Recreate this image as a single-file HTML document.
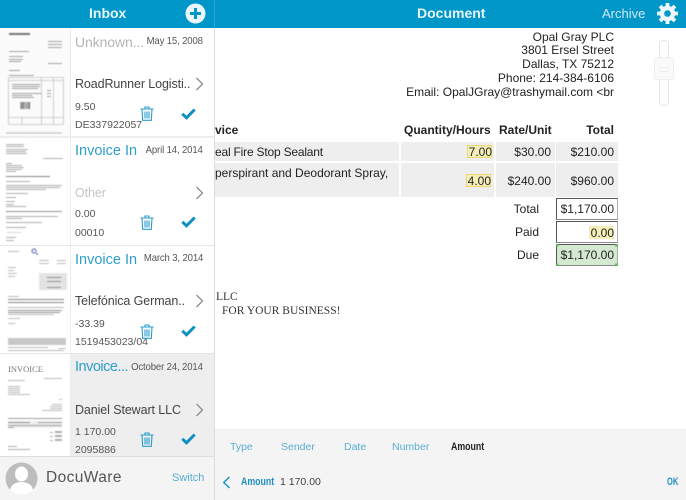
<!DOCTYPE html>
<html><head><meta charset="utf-8"><style>
html,body{margin:0;padding:0}
body{width:686px;height:500px;position:relative;overflow:hidden;background:#fff;font-family:"Liberation Sans",sans-serif;color:#333}
.a{position:absolute;white-space:nowrap;line-height:1}
svg{position:absolute;overflow:visible}
svg.th{filter:blur(.55px);opacity:.8}
.ttl{font-size:14.5px;color:#2f9fcc;left:75px}
.dt{font-size:10.5px;color:#555;right:483px;letter-spacing:-.15px;transform:scaleX(.91);transform-origin:right}
.nm{font-size:12.5px;color:#444;left:75px;letter-spacing:-.1px}
.sm{font-size:10.5px;color:#555;left:75px}
.doc{font-size:12px;color:#222}
.r{text-align:right}
.cell{position:absolute;background:#eee}
.y{position:absolute;background:#f6eeb8;border:1px solid #ecd86e;box-sizing:border-box}
.box{position:absolute;left:556px;width:62px;height:22px;box-sizing:border-box;border:1px solid #555;border-right-color:#aaa;border-bottom-color:#888}
.tab{font-size:10.5px;color:#5aaed2;top:442px}
</style></head><body>

<!-- headers -->
<div class="a" style="left:0;top:0;width:686px;height:28px;background:#0096c8"></div>
<div class="a" style="left:214px;top:0;width:1px;height:28px;background:#2aa6d2"></div>
<div class="a" style="left:89px;top:6px;font-size:14px;font-weight:bold;color:#e8f6fb">Inbox</div>
<svg style="left:185px;top:3px" width="21" height="21" viewBox="0 0 21 21"><circle cx="10.5" cy="10.5" r="10" fill="#e9f6fb"/><path d="M10.5 5v11M5 10.5h11" stroke="#0096c8" stroke-width="3"/></svg>
<div class="a" style="left:417px;top:6px;font-size:14px;font-weight:bold;color:#e8f6fb">Document</div>
<div class="a" style="left:602px;top:7px;font-size:13px;color:#cfeaf5">Archive</div>
<svg style="left:657px;top:3px" width="21" height="21" viewBox="0 0 21 21"><circle cx="10.5" cy="10.5" r="5.5" fill="none" stroke="#eef8fc" stroke-width="4.4"/><g stroke="#eef8fc" stroke-width="3.8"><path d="M10.5 0v4M10.5 17v4M0 10.5h4M17 10.5h4M3 3l3 3M15 15l3 3M18 3l-3 3M6 15l-3 3"/></g></svg>

<!-- left panel -->
<div class="a" style="left:214px;top:28px;width:1px;height:472px;background:#dcdcdc"></div>
<div class="a" style="left:70px;top:28px;width:1px;height:428px;background:#ececec"></div>
<div class="a" style="left:0;top:136px;width:214px;height:2px;background:#eee"></div>
<div class="a" style="left:0;top:245px;width:214px;height:1px;background:#e6e6e6"></div>
<div class="a" style="left:0;top:353px;width:214px;height:1px;background:#e6e6e6"></div>
<div class="a" style="left:71px;top:354px;width:143px;height:102px;background:#eee"></div>

<!-- thumb 1 -->
<div class="a" style="left:0;top:28px;width:70px;height:108px;background:#fbfbfb"></div>
<svg class="th" style="left:0;top:28px" width="70" height="108" viewBox="0 0 70 108">
<g fill="#8e8e8e">
<rect x="9" y="5" width="21" height="2" fill="#555"/>
<rect x="48" y="13" width="14" height="1"/><rect x="48" y="16" width="14" height="1"/><rect x="48" y="19" width="14" height="1"/>
<rect x="9" y="23" width="20" height="1"/><rect x="9" y="28" width="14" height="1"/><rect x="9" y="31" width="14" height="1"/><rect x="9" y="33" width="12" height="1"/>
<rect x="48" y="35" width="14" height="1"/><rect x="9" y="42" width="11" height="1"/><rect x="9" y="47" width="25" height="1"/>
<rect x="12" y="56" width="28" height="1"/><rect x="12" y="58" width="28" height="1"/><rect x="12" y="60" width="26" height="1"/>
<rect x="12" y="65" width="30" height="1"/><rect x="12" y="67" width="20" height="1"/><rect x="12" y="69" width="22" height="1"/>
<rect x="47" y="62" width="4" height="1"/><rect x="47" y="65" width="4" height="1"/><rect x="47" y="68" width="4" height="1"/>
</g>
<path d="M8.500 49.500h55M8.500 49.500v47M63.500 49.500v47M8.500 96.500h55M8.500 89.500h55M41.500 49.500v47M53.500 49.500v47M8.500 52.500h55M22 90v6" fill="none" stroke="#b4b4b4" stroke-width=".8"/>
<path d="M21 81V74M22.500 81V74M24 81V74M26 81V74M28 81V74M29.500 81V74" stroke="#333" stroke-width="1"/>
<path d="M6 105h56" stroke="#aaa"/>
</svg>

<!-- thumb 2 -->
<svg class="th" style="left:0;top:138px" width="70" height="107" viewBox="0 0 70 107">
<g fill="#999">
<rect x="6" y="6" width="18" height="1"/><rect x="6" y="8" width="18" height="1"/><rect x="6" y="11" width="22" height="1"/><rect x="6" y="13" width="20" height="1"/><rect x="6" y="15" width="21" height="1"/>
<rect x="43" y="20" width="20" height="1"/><rect x="6" y="25" width="6" height="1"/><rect x="6" y="27" width="16" height="1"/><rect x="6" y="29" width="18" height="1"/><rect x="6" y="31" width="16" height="1"/><rect x="6" y="33" width="10" height="1"/>
<rect x="6" y="38" width="44" height="1" fill="#666"/><rect x="6" y="43" width="24" height="1"/><rect x="6" y="47" width="56" height="1"/><rect x="6" y="49" width="54" height="1"/><rect x="6" y="51" width="40" height="1"/>
<rect x="6" y="55" width="22" height="1"/><rect x="6" y="59" width="10" height="1"/><rect x="6" y="63" width="9" height="1"/><rect x="6" y="66" width="8" height="1"/><rect x="6" y="68" width="20" height="1"/>
<rect x="6" y="73" width="56" height="1" fill="#777"/><rect x="6" y="78" width="52" height="1"/><rect x="6" y="80" width="16" height="1"/><rect x="6" y="84" width="36" height="1"/><rect x="6" y="89" width="20" height="1"/>
<rect x="7" y="94" width="14" height="1" fill="#ccc"/><rect x="6" y="99" width="10" height="1"/><rect x="6" y="102" width="8" height="1"/>
</g></svg>

<!-- thumb 3 -->
<svg class="th" style="left:0;top:246px" width="70" height="107" viewBox="0 0 70 107">
<rect x="39" y="27" width="28" height="17" fill="#ddd"/>
<circle cx="34" cy="5" r="2" fill="none" stroke="#4d5fa8" stroke-width="1.2"/><circle cx="37" cy="8" r="1" fill="#4d5fa8"/>
<g fill="#aaa"><rect x="8" y="5" width="11" height="1"/><rect x="39" y="14" width="10" height="1"/><rect x="57" y="14" width="9" height="1"/><rect x="39" y="17" width="10" height="1"/><rect x="57" y="17" width="9" height="1"/>
<rect x="8" y="21" width="8" height="1"/><rect x="8" y="24" width="6" height="1"/><rect x="8" y="27" width="9" height="1"/><rect x="8" y="30" width="7" height="1"/>
<rect x="47" y="31" width="14" height="1" fill="#777"/><rect x="47" y="35" width="14" height="1" fill="#777"/><rect x="47" y="41" width="14" height="1" fill="#777"/>
<rect x="8" y="50" width="11" height="1"/><rect x="8" y="53" width="56" height="1" fill="#666"/><rect x="8" y="56" width="56" height="1" fill="#666"/><rect x="8" y="61" width="56" height="1"/><rect x="8" y="64" width="54" height="1" fill="#777"/><rect x="8" y="66" width="52" height="1" fill="#777"/><rect x="8" y="68" width="46" height="1"/><rect x="8" y="72" width="12" height="1"/><rect x="8" y="77" width="7" height="1"/>
</g>
<rect x="8" y="92" width="58" height="7" fill="#bbb"/>
<g fill="#aaa"><rect x="8" y="101" width="40" height="1"/><rect x="58" y="102" width="8" height="1"/><rect x="8" y="104" width="56" height="1"/></g>
</svg>

<!-- thumb 4 -->
<div class="a" style="left:8px;top:365px;font-family:'Liberation Serif',serif;font-size:8.500px;color:#777;filter:blur(.3px)">INVOICE</div>
<svg class="th" style="left:0;top:354px" width="70" height="102" viewBox="0 0 70 102">
<g fill="#aaa"><rect x="44" y="24" width="18" height="1"/><rect x="8" y="26" width="17" height="1"/><rect x="8" y="32" width="12" height="1"/><rect x="8" y="34" width="12" height="1"/><rect x="8" y="36" width="12" height="1"/><rect x="8" y="38" width="12" height="1"/><rect x="8" y="40" width="22" height="1"/>
<rect x="59" y="45" width="3" height="1"/><rect x="52" y="50" width="10" height="1"/><rect x="50" y="52" width="12" height="1"/><rect x="50" y="54" width="12" height="1"/><rect x="42" y="56" width="20" height="1"/>
<rect x="8" y="64" width="54" height="1" fill="#888"/></g>
<rect x="8" y="67" width="54" height="7" fill="#eaeaea"/><rect x="8" y="68" width="22" height="1" fill="#777"/><rect x="38" y="68" width="24" height="1" fill="#888"/>
<rect x="8" y="71" width="30" height="1" fill="#888"/><rect x="8" y="73" width="6" height="1" fill="#888"/><rect x="38" y="71" width="24" height="1" fill="#888"/>
<g fill="#999"><rect x="50" y="78" width="3" height="1"/><rect x="55" y="77" width="7" height="2"/><rect x="50" y="82" width="3" height="1"/><rect x="55" y="81" width="7" height="2"/><rect x="50" y="86" width="3" height="1"/><rect x="55" y="85" width="7" height="2"/>
<rect x="8" y="92" width="9" height="1"/><rect x="8" y="95" width="22" height="1"/></g>
</svg>

<!-- row 1 -->
<div class="a ttl" style="top:35px;color:#b5b5b5;font-size:14px;letter-spacing:-.1px">Unknown...</div>
<div class="a dt" style="top:36px">May 15, 2008</div>
<div class="a nm" style="top:78px">RoadRunner Logisti..</div>
<div class="a sm" style="top:102px">9.50</div>
<div class="a sm" style="top:120px">DE337922057</div>
<!-- row 2 -->
<div class="a ttl" style="top:144px">Invoice In</div>
<div class="a dt" style="top:145px">April 14, 2014</div>
<div class="a nm" style="top:187px;color:#c4c4c4">Other</div>
<div class="a sm" style="top:209px">0.00</div>
<div class="a sm" style="top:228px">00010</div>
<!-- row 3 -->
<div class="a ttl" style="top:253px">Invoice In</div>
<div class="a dt" style="top:253px">March 3, 2014</div>
<div class="a nm" style="top:295px">Telefónica German..</div>
<div class="a sm" style="top:319px">-33.39</div>
<div class="a sm" style="top:337px">1519453023/04</div>
<!-- row 4 -->
<div class="a ttl" style="top:360px;letter-spacing:-.5px">Invoice...</div>
<div class="a dt" style="top:362px">October 24, 2014</div>
<div class="a nm" style="top:404px">Daniel Stewart LLC</div>
<div class="a sm" style="top:427px">1 170.00</div>
<div class="a sm" style="top:445px">2095886</div>

<!-- chevrons -->
<svg style="left:195px;top:77px" width="9" height="14" viewBox="0 0 9 14"><path d="M1.500 1l6 6-6 6" fill="none" stroke="#8c8c8c" stroke-width="1.300"/></svg>
<svg style="left:195px;top:186px" width="9" height="14" viewBox="0 0 9 14"><path d="M1.500 1l6 6-6 6" fill="none" stroke="#8c8c8c" stroke-width="1.300"/></svg>
<svg style="left:195px;top:294px" width="9" height="14" viewBox="0 0 9 14"><path d="M1.500 1l6 6-6 6" fill="none" stroke="#8c8c8c" stroke-width="1.300"/></svg>
<svg style="left:195px;top:403px" width="9" height="14" viewBox="0 0 9 14"><path d="M1.500 1l6 6-6 6" fill="none" stroke="#8c8c8c" stroke-width="1.300"/></svg>

<!-- trash icons -->
<svg style="left:140px;top:106px" width="14" height="15" viewBox="0 0 14 15"><path d="M.5 3h13M5 3V1h4v2M2 3l.7 11.300h8.600L12 3M5 5.500v7M7 5.500v7M9 5.500v7" fill="none" stroke="#2a9dcb" stroke-width="1.100"/></svg>
<svg style="left:140px;top:215px" width="14" height="15" viewBox="0 0 14 15"><path d="M.5 3h13M5 3V1h4v2M2 3l.7 11.300h8.600L12 3M5 5.500v7M7 5.500v7M9 5.500v7" fill="none" stroke="#2a9dcb" stroke-width="1.100"/></svg>
<svg style="left:140px;top:324px" width="14" height="15" viewBox="0 0 14 15"><path d="M.5 3h13M5 3V1h4v2M2 3l.7 11.300h8.600L12 3M5 5.500v7M7 5.500v7M9 5.500v7" fill="none" stroke="#2a9dcb" stroke-width="1.100"/></svg>
<svg style="left:140px;top:432px" width="14" height="15" viewBox="0 0 14 15"><path d="M.5 3h13M5 3V1h4v2M2 3l.7 11.300h8.600L12 3M5 5.500v7M7 5.500v7M9 5.500v7" fill="none" stroke="#2a9dcb" stroke-width="1.100"/></svg>

<!-- checks -->
<svg style="left:181px;top:108px" width="15" height="12" viewBox="0 0 15 12"><path d="M1.300 5.800l4.200 4L13.700 1.500" fill="none" stroke="#0d8fc2" stroke-width="3"/></svg>
<svg style="left:181px;top:216px" width="15" height="12" viewBox="0 0 15 12"><path d="M1.300 5.800l4.200 4L13.700 1.500" fill="none" stroke="#0d8fc2" stroke-width="3"/></svg>
<svg style="left:181px;top:325px" width="15" height="12" viewBox="0 0 15 12"><path d="M1.300 5.800l4.200 4L13.700 1.500" fill="none" stroke="#0d8fc2" stroke-width="3"/></svg>
<svg style="left:181px;top:433px" width="15" height="12" viewBox="0 0 15 12"><path d="M1.300 5.800l4.200 4L13.700 1.500" fill="none" stroke="#0d8fc2" stroke-width="3"/></svg>

<!-- footer -->
<div class="a" style="left:0;top:456px;width:214px;height:44px;background:#f4f4f4;border-top:1px solid #ddd;box-sizing:border-box"></div>
<svg style="left:5px;top:462px" width="33" height="33" viewBox="0 0 33 33"><circle cx="16.500" cy="16.500" r="16" fill="#bdbdbd"/><ellipse cx="16.500" cy="12" rx="6.500" ry="7.500" fill="#fff"/><path d="M5 28c1-6 7-8 11.500-8S27 22 28 28c-3 3-7 4.500-11.500 4.500S8 31 5 28z" fill="#fff"/></svg>
<div class="a" style="left:46px;top:470px;font-size:15.500px;color:#555;letter-spacing:.4px">DocuWare</div>
<div class="a" style="left:172px;top:473px;font-size:11px;color:#55acd2">Switch</div>

<!-- document -->
<div class="a doc r" style="right:72px;top:31px">Opal Gray PLC</div>
<div class="a doc r" style="right:72px;top:44px">3801 Ersel Street</div>
<div class="a doc r" style="right:72px;top:58px">Dallas, TX 75212</div>
<div class="a doc r" style="right:72px;top:72px">Phone: 214-384-6106</div>
<div class="a doc r" style="right:72px;top:86px">Email: OpalJGray@trashymail.com &lt;br</div>

<!-- zoom slider -->
<div class="a" style="left:659px;top:40px;width:10px;height:66px;border:1px solid #e6e6e6;border-radius:4px;box-sizing:border-box;background:#fff"></div>
<div class="a" style="left:654px;top:57px;width:20px;height:23px;border:1px solid #eee;border-radius:3px;box-sizing:border-box;background:#f9f9f9"></div>
<div class="a" style="left:659px;top:67px;width:10px;height:3px;border-top:1px solid #eee;border-bottom:1px solid #eee"></div>

<!-- table -->
<div class="a doc" style="left:215px;top:124px;font-weight:bold;width:26px;overflow:hidden">vice</div>
<div class="a doc" style="left:404px;top:124px;font-weight:bold">Quantity/Hours</div>
<div class="a doc" style="left:499px;top:124px;font-weight:bold">Rate/Unit</div>
<div class="a doc r" style="right:72px;top:124px;font-weight:bold">Total</div>
<div class="cell" style="left:215px;top:142px;width:184px;height:19px"></div>
<div class="cell" style="left:401px;top:142px;width:93px;height:19px"></div>
<div class="cell" style="left:496px;top:142px;width:59px;height:19px"></div>
<div class="cell" style="left:556px;top:142px;width:62px;height:19px"></div>
<div class="cell" style="left:215px;top:163px;width:184px;height:34px"></div>
<div class="cell" style="left:401px;top:163px;width:93px;height:34px"></div>
<div class="cell" style="left:496px;top:163px;width:59px;height:34px"></div>
<div class="cell" style="left:556px;top:163px;width:62px;height:34px"></div>
<div class="y" style="left:467px;top:145px;width:25px;height:13px"></div>
<div class="y" style="left:466px;top:174px;width:25px;height:13px"></div>
<div class="a doc" style="left:215px;top:146px;letter-spacing:-.2px">eal Fire Stop Sealant</div>
<div class="a doc r" style="right:194px;top:146px">7.00</div>
<div class="a doc r" style="right:135px;top:146px">$30.00</div>
<div class="a doc r" style="right:72px;top:146px">$210.00</div>
<div class="a doc" style="left:215px;top:167px">perspirant and Deodorant Spray,</div>
<div class="a doc r" style="right:195px;top:175px">4.00</div>
<div class="a doc r" style="right:135px;top:175px">$240.00</div>
<div class="a doc r" style="right:72px;top:175px">$960.00</div>

<!-- totals -->
<div class="box" style="top:198px"></div>
<div class="box" style="top:221px"></div>
<div class="box" style="top:244px;background:#d3e9d0"></div>
<div class="y" style="left:589px;top:226px;width:25px;height:13px;border-color:#f6eeb8"></div>
<svg style="left:556px;top:244px" width="62" height="22" viewBox="0 0 62 22"><g fill="#5cb85c"><rect x="0" y="0" width="2.500" height="2.500"/><rect x="59" y="0" width="2.500" height="2.500"/><rect x="0" y="19.500" width="2.500" height="2.500"/><rect x="59" y="19.500" width="2.500" height="2.500"/></g></svg>
<div class="a doc r" style="right:147px;top:203px">Total</div>
<div class="a doc r" style="right:72px;top:203px">$1,170.00</div>
<div class="a doc r" style="right:147px;top:226px">Paid</div>
<div class="a doc r" style="right:72px;top:227px">0.00</div>
<div class="a doc r" style="right:147px;top:249px">Due</div>
<div class="a doc r" style="right:72px;top:249px">$1,170.00</div>

<div class="a" style="left:216px;top:292px;font-family:'Liberation Serif',serif;font-size:11.500px;color:#333">LLC</div>
<div class="a" style="left:222px;top:306px;font-family:'Liberation Serif',serif;font-size:11.500px;color:#333">FOR YOUR BUSINESS!</div>

<!-- bottom bar -->
<div class="a" style="left:215px;top:429px;width:471px;height:71px;background:#f4f4f4"></div>
<div class="a tab" style="left:230px">Type</div>
<div class="a tab" style="left:281px">Sender</div>
<div class="a tab" style="left:344px">Date</div>
<div class="a tab" style="left:392px">Number</div>
<div class="a tab" style="left:451px;color:#222;font-weight:bold;font-size:11px;transform:scaleX(.8);transform-origin:left">Amount</div>
<svg style="left:222px;top:476px" width="9" height="13" viewBox="0 0 9 13"><path d="M7.500 1L1.800 6.500l5.700 5.500" fill="none" stroke="#1c94c6" stroke-width="1.500"/></svg>
<div class="a" style="left:241px;top:477px;font-size:11px;font-weight:bold;color:#1c8fc0;transform:scaleX(.8);transform-origin:left">Amount</div>
<div class="a" style="left:280px;top:477px;font-size:10.500px;color:#444">1 170.00</div>
<div class="a" style="left:667px;top:477px;font-size:11px;font-weight:bold;color:#1c8fc0;transform:scaleX(.68);transform-origin:left">OK</div>

</body></html>
